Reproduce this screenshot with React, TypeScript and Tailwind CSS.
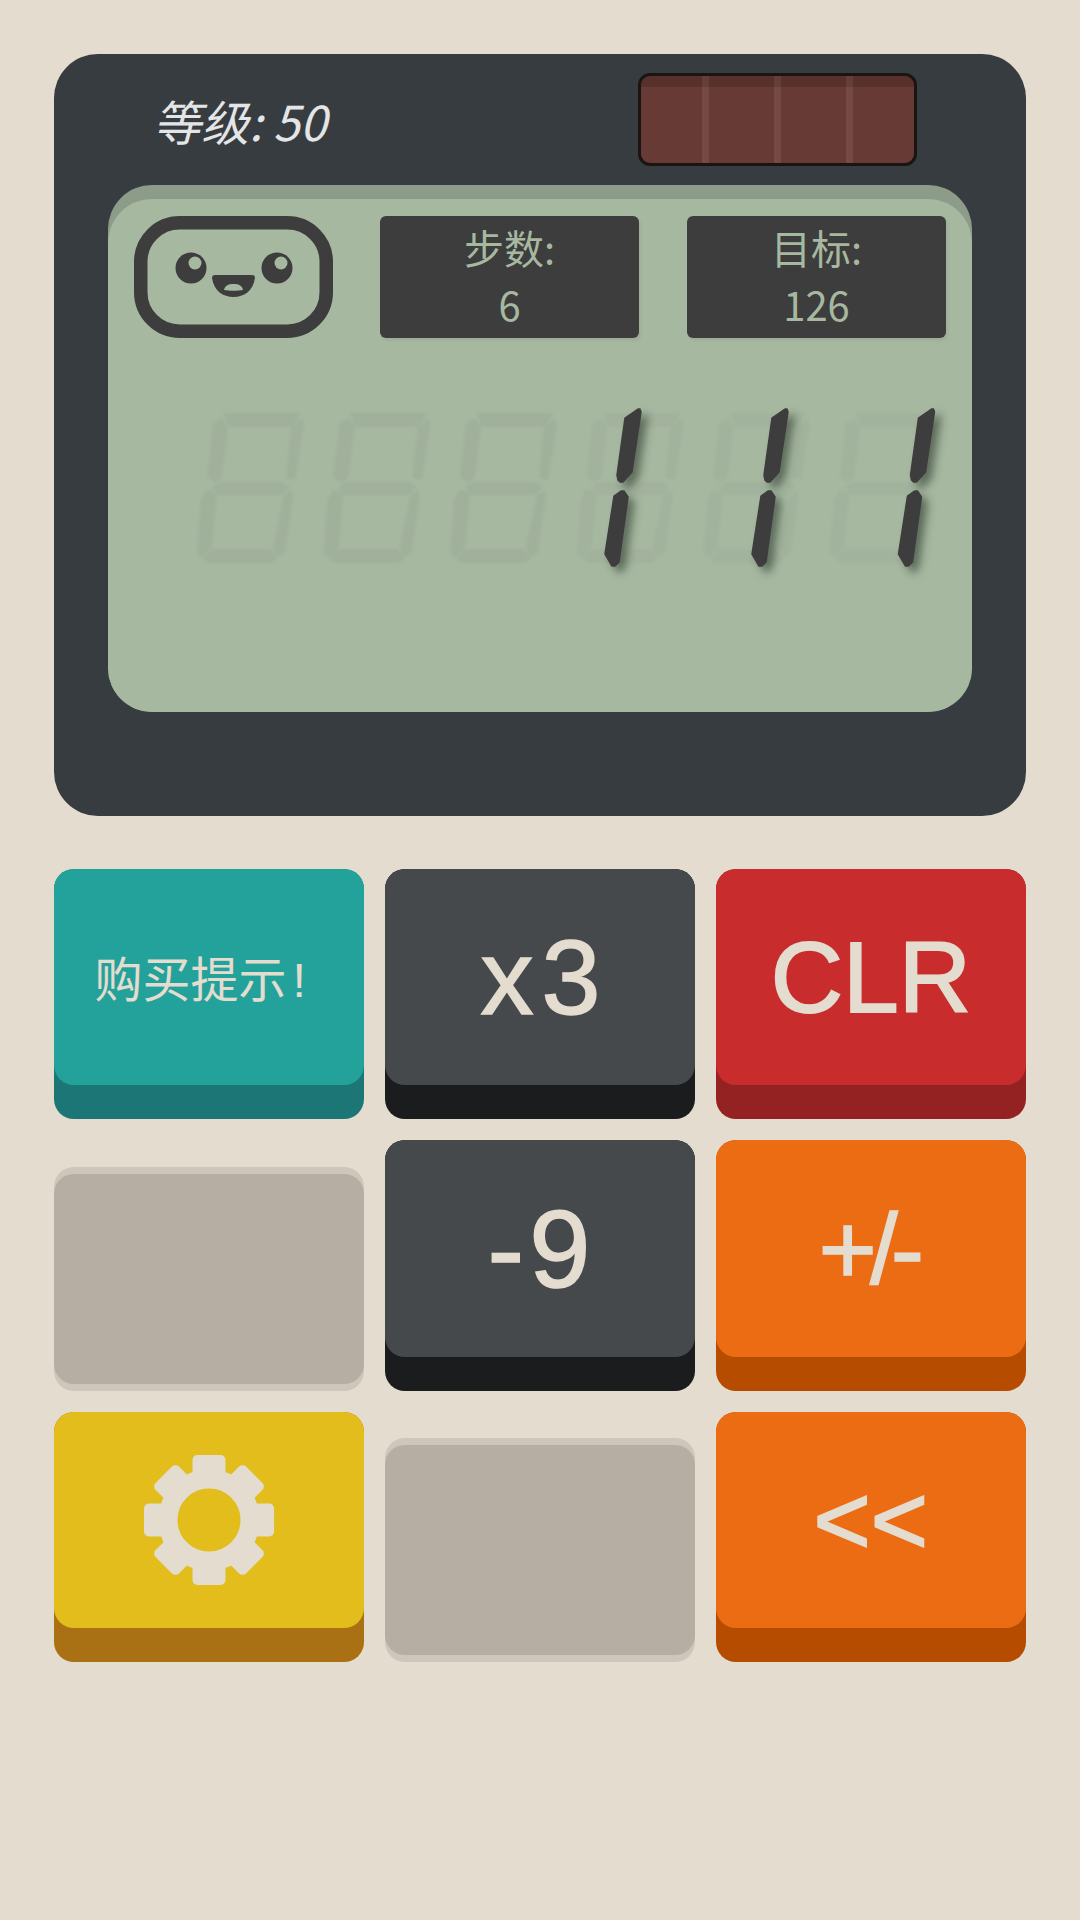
import React from "react";

const SEGS: string[] = [
  "223,413 301,413 292,427 229,427",
  "302,418 304,425 295,480 286,478 291,428",
  "222,418 213,423 207,477 215,483 222,477 228,427",
  "212,487 220,482 283,482 290,487 282,495 218,495",
  "207,489 201,500 197,553 202,558 212,547 217,493",
  "284,495 292,490 293,497 285,553 278,557 273,547",
  "203,558 212,549 271,549 278,558 273,563 208,563",
];
const GHOST_OPACITY = [0.045, 0.045, 0.045, 0.03, 0.028, 0.028];

function Digits() {
  return (
    <svg width="864" height="220" viewBox="108 380 864 220" className="block mt-[42px]">
      <defs>
        <filter id="ghostShadow" x="-20%" y="-20%" width="140%" height="140%">
          <feGaussianBlur in="SourceGraphic" stdDeviation="1.5" result="soft" />
          <feDropShadow in="soft" dx="4" dy="4" stdDeviation="4" floodColor="#000" floodOpacity="0.025" />
        </filter>
        <filter id="litShadow" x="-80%" y="-20%" width="260%" height="140%">
          <feDropShadow dx="6" dy="6" stdDeviation="4" floodColor="#2c3a2c" floodOpacity="0.6" />
        </filter>
      </defs>
      {GHOST_OPACITY.map((o, i) => (
        <g key={i} transform={`translate(${i * 126.5} 0)`} filter="url(#ghostShadow)">
          {SEGS.map((p, j) => (
            <polygon key={j} points={p} fill="#000" fillOpacity={o} />
          ))}
        </g>
      ))}
      {[0, 147, 293.5].map((dx) => (
        <g key={dx} transform={`translate(${dx} 0)`} fill="#3d3d3d" stroke="#3d3d3d" strokeWidth="1.5" strokeLinejoin="round" filter="url(#litShadow)">
          <polygon points="625,418 638,409 640,409 641,412 632,472 623,482 620,482 618,480 617,475" />
          <polygon points="621,491 624,491 628,497 619,562 615,566 612,566 605,554 614,496" />
        </g>
      ))}
    </svg>
  );
}

function Face() {
  return (
    <svg width="199" height="122" viewBox="134 216 199 122" className="block shrink-0">
      <rect x="140.75" y="222.75" width="185.5" height="108.5" rx="39" fill="none" stroke="#3d3d3d" strokeWidth="13.5" />
      <circle cx="191" cy="268" r="15.5" fill="#3d3d3d" />
      <circle cx="277" cy="268" r="15.5" fill="#3d3d3d" />
      <circle cx="195" cy="263" r="6.5" fill="#a7b8a1" />
      <circle cx="281" cy="263" r="6.5" fill="#a7b8a1" />
      <path d="M215 275 H252 Q255 275 255 278 C253 291 244 297 233.500 297 C223 297 214 291 212 278 Q212 275 215 275 Z" fill="#3d3d3d" />
      <path d="M224 290 C225 285 229 284 233.500 284 C238 284 242 285 243 290 C238 291 229 291 224 290 Z" fill="#a7b8a1" />
    </svg>
  );
}

function Gear() {
  return (
    <svg width="134" height="134" viewBox="-67 -67 134 134" className="block">
      <circle r="41" fill="none" stroke="#e3dccf" strokeWidth="19" />
      {[0, 45, 90, 135, 180, 225, 270, 315].map((a) => (
        <rect key={a} x="-16.500" y={a % 90 === 0 ? -65 : -64} width="33" height="24" rx="5" fill="#e3dccf" transform={`rotate(${a})`} />
      ))}
    </svg>
  );
}

function Stat({ label, value }: { label: string; value: string }) {
  return (
    <div className="w-[259px] h-[122px] shrink-0 rounded-[6px] bg-[#3d3d3d] shadow-[2px_3px_3px_rgba(0,0,0,0.06)] flex flex-col items-center justify-center pb-[2px] text-[#a7b8a1] text-[40px] leading-[57px] font-['Noto_Sans_CJK_SC',sans-serif] font-normal">
      <div>{label}</div>
      <div>{value}</div>
    </div>
  );
}

function Key({ base, face, children }: { base: string; face: string; children: React.ReactNode }) {
  return (
    <div className={`h-full rounded-[20px] pb-[34px] flex flex-col ${base}`}>
      <div className={`flex-1 rounded-[20px] flex items-center justify-center text-[#e3dccf] font-['Liberation_Sans','Noto_Sans_CJK_SC',sans-serif] ${face}`}>
        {children}
      </div>
    </div>
  );
}

function Blank() {
  return (
    <div className="h-[224px] self-end rounded-[20px] bg-[#cdc6ba] py-[7px] flex flex-col">
      <div className="flex-1 rounded-[20px] bg-[#b6aea2]" />
    </div>
  );
}

export default function App() {
  return (
    <div className="w-[1080px] h-[1920px] bg-[#e3dccf] pt-[54px] px-[54px] overflow-hidden">
      <div className="h-[762px] rounded-[44px] bg-[#373c40]">
        <div className="h-[131px] flex items-start">
          <div className="pl-[99px] pt-[33px] text-[48px] leading-[66px] italic font-normal text-[#e3e5e6] font-['Noto_Sans_CJK_SC',sans-serif]">
            等级: 50
          </div>
          <div className="relative ml-auto mr-[109px] mt-[19px] w-[279px] h-[93px] rounded-[12px] border-[3px] border-[#1a1512] bg-[#683a35] overflow-hidden flex pl-[61px] gap-[65px]">
            <div className="w-[7px] bg-[#754a44]" />
            <div className="w-[7px] bg-[#754a44]" />
            <div className="w-[7px] bg-[#754a44]" />
            <div className="absolute inset-x-0 top-0 h-[11px] bg-black/15" />
          </div>
        </div>
        <div className="mx-[54px] h-[527px] rounded-[44px] bg-[#8c9c88] pt-[14px] flex flex-col">
          <div className="flex-1 rounded-[44px] bg-[#a7b8a1] pt-[17px] overflow-hidden">
            <div className="flex pl-[26px]">
              <Face />
              <div className="flex gap-[48px] ml-[47px]">
                <Stat label="步数:" value="6" />
                <Stat label="目标:" value="126" />
              </div>
            </div>
            <Digits />
          </div>
        </div>
      </div>

      <div className="mt-[53px] grid grid-cols-3 gap-x-[20.5px] gap-y-[21px] grid-rows-[250px_251px_250px]">
        <Key base="bg-[#1b7675]" face="bg-[#23a29c]">
          <span className="text-[48px] leading-none pr-[18px] pt-[8px]">
            购买提示<span className="ml-[6px]">!</span>
          </span>
        </Key>
        <Key base="bg-[#1b1c1e]" face="bg-[#46494c]">
          <span className="text-[106px] leading-none tracking-[8px] pl-[9px] [-webkit-text-stroke:1.5px_#e3dccf]">x3</span>
        </Key>
        <Key base="bg-[#952222]" face="bg-[#c92c2c]">
          <span className="text-[100px] leading-none [-webkit-text-stroke:2px_#e3dccf]">CLR</span>
        </Key>

        <Blank />
        <Key base="bg-[#1b1c1e]" face="bg-[#46494c]">
          <span className="text-[110px] leading-none tracking-[5px] pl-[3px] [-webkit-text-stroke:1.5px_#e3dccf]">-9</span>
        </Key>
        <Key base="bg-[#b64c00]" face="bg-[#ec6c14]">
          <span className="text-[100px] leading-none tracking-[-7px] pr-[6px] [-webkit-text-stroke:1.5px_#e3dccf]">+/-</span>
        </Key>

        <Key base="bg-[#aa7014]" face="bg-[#e3bd1c]">
          <Gear />
        </Key>
        <Blank />
        <Key base="bg-[#b64c00]" face="bg-[#ec6c14]">
          <span className="text-[98px] leading-none [-webkit-text-stroke:2px_#e3dccf]">{"<<"}</span>
        </Key>
      </div>
    </div>
  );
}
